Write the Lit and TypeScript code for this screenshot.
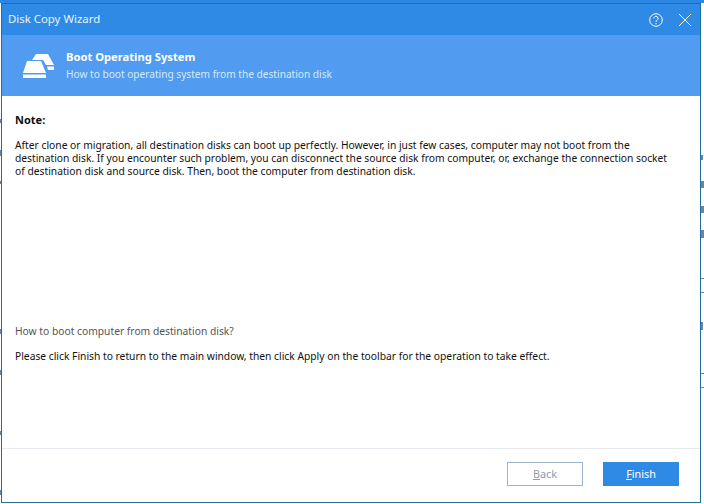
import { LitElement, html, css } from "lit";
import { customElement } from "lit/decorators.js";

const LEFT_MARKS = [[119, 4], [150, 6], [181, 3], [329, 5], [370, 5], [431, 4], [490, 5]];
const RIGHT_MARKS = [[155, 5, 2], [181, 7, 3], [206, 7, 3], [230, 8, 3], [278, 1, 3], [292, 1, 3], [322, 8, 2], [373, 1, 3], [387, 1, 3]];

@customElement("app-root")
export class AppRoot extends LitElement {
  static styles = css`
    :host { display: block; position: relative; width: 704px; height: 504px; background: #fff; overflow: hidden; font-family: "Noto Sans", sans-serif; }
    .screen { display: flex; flex-direction: column; width: 704px; height: 504px; }
    .topstrip { height: 3px; flex: none; background: #2b87e3; }
    .mid { display: flex; height: 500px; flex: none; padding-left: 1px; }
    .window { width: 700px; box-sizing: border-box; border: 1px solid #1f6f9f; display: flex; flex-direction: column; background: #fff; }
    .titlebar { height: 31px; flex: none; background: #2f8ae6; display: flex; align-items: center; padding: 0 8px 0 6px; color: #e8f3fd; font-size: 11.4px; }
    .title { flex: 1; padding-bottom: 2px; }
    .tools { display: flex; align-items: center; gap: 14px; }
    .header { height: 61px; flex: none; background: #519cf0; display: flex; align-items: center; color: #fff; }
    .logo { margin-left: 20px; width: 34px; height: 28px; }
    .htext { margin-left: 10px; display: flex; flex-direction: column; gap: 3px; font-size: 10.13px; line-height: 14px; margin-top: -1px; }
    .htext b { font-weight: 700; font-size: 11.2px; }
    .htext span { color: #d6e8fb; }
    .body { flex: 1; padding: 17px 25px 0 13px; color: #111; font-size: 10.27px; line-height: 13px; display: flex; flex-direction: column; }
    .note { font-weight: bold; font-size: 11px; margin-bottom: 13px; }
    .spacer { flex: 1; }
    .q { color: #555; margin-bottom: 12px; }
    .p { margin-bottom: 85px; }
    .footer { height: 54px; flex: none; border-top: 1px solid #e6ebef; display: flex; align-items: flex-start; justify-content: flex-end; gap: 20px; padding: 13px 21px 0 0; box-sizing: border-box; }
    .btn { width: 76px; height: 24px; box-sizing: border-box; font-size: 10.8px; padding-bottom: 2px; display: flex; align-items: center; justify-content: center; }
    .back { border: 1px solid #9db3cb; color: #8a9db3; }
    .finish { background: #2f8ae6; color: #fff; }
    u { text-underline-offset: 1px; }
    .mark { position: absolute; background: #6b84a3; }
  `;
  render() {
    return html`<div class="screen">
      <div class="topstrip"></div>
      <div class="mid">
        <div class="window">
          <div class="titlebar">
            <div class="title">Disk Copy Wizard</div>
            <div class="tools">
              <svg width="16" height="16" viewBox="0 0 16 16" fill="none" stroke="#fff"><circle cx="8" cy="8" r="6.3"/><path d="M5.9 6.4a2.1 2.1 0 1 1 3.3 1.7c-.8.5-1.2.9-1.2 1.8"/><path d="M8 11v1.2"/></svg>
              <svg width="14" height="14" viewBox="0 0 14 14" fill="none" stroke="#fff"><path d="M1 1l12 12M13 1L1 13"/></svg>
            </div>
          </div>
          <div class="header">
            <svg class="logo" viewBox="0 0 34 28" fill="#fff"><path d="M14 2h12l6 11h-8l-3-5H10z"/><path d="M25 14.5h7V18h-6z"/><path d="M5 9h14l5 12H1z"/><path d="M1 22.5h23V26H1z"/></svg>
            <div class="htext"><b>Boot Operating System</b><span>How to boot operating system from the destination disk</span></div>
          </div>
          <div class="body">
            <div class="note">Note:</div>
            <div>After clone or migration, all destination disks can boot up perfectly. However, in just few cases, computer may not boot from the destination disk. If you encounter such problem, you can disconnect the source disk from computer, or, exchange the connection socket of destination disk and source disk. Then, boot the computer from destination disk.</div>
            <div class="spacer"></div>
            <div class="q">How to boot computer from destination disk?</div>
            <div class="p">Please click Finish to return to the main window, then click Apply on the toolbar for the operation to take effect.</div>
          </div>
          <div class="footer">
            <div class="btn back"><span><u>B</u>ack</span></div>
            <div class="btn finish"><span><u>F</u>inish</span></div>
          </div>
        </div>
      </div>
    </div>
    ${LEFT_MARKS.map(([y, h]) => html`<div class="mark" style="left:0;top:${y}px;width:1px;height:${h}px"></div>`)}
    ${RIGHT_MARKS.map(([y, h, w]) => html`<div class="mark" style="left:701px;top:${y}px;width:${w}px;height:${h}px"></div>`)}`;
  }
}
